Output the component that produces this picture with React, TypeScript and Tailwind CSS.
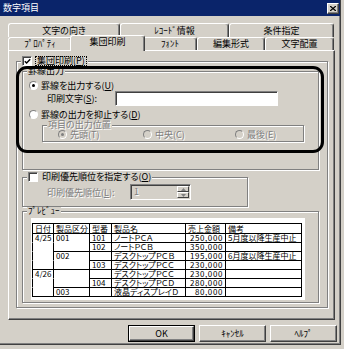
import type { ReactNode } from 'react'

const dim = 'text-[#808080] [text-shadow:1px_1px_0_#ffffff]'

const backTabs = [
  { label: '文字の向き', cls: 'h-full w-[112px]' },
  { label: 'ﾚｺｰﾄﾞ情報', cls: 'h-full w-[109px]' },
  { label: '条件指定', cls: 'h-full w-[105px]' },
]

const frontTabs = [
  { label: 'ﾌﾟﾛﾊﾟﾃｨ', cls: 'h-full w-[64px]' },
  { label: '集団印刷', cls: 'relative z-10 -mx-[2px] -mt-[2px] h-[16px] w-[75px]' },
  { label: 'ﾌｫﾝﾄ', cls: 'h-full w-[54px]' },
  { label: '編集形式', cls: 'h-full w-[68px]' },
  { label: '文字配置', cls: 'h-full w-[69px]' },
]

const header = ['日付', '製品区分', '型番', '製品名', '売上金額', '備考']

const rows = [
  ['4/25', '001', '101', 'ノートＰＣＡ', '250,000', '5月度以降生産中止'],
  ['', '', '102', 'ノートＰＣＢ', '350,000', ''],
  ['', '002', '', 'デスクトップＰＣＢ', '195,000', '6月度以降生産中止'],
  ['', '', '103', 'デスクトップＰＣＣ', '230,000', ''],
  ['4/26', '', '', 'デスクトップＰＣＣ', '230,000', ''],
  ['', '', '104', 'デスクトップＰＣＤ', '280,000', ''],
  ['', '003', '', '液晶ディスプレイＤ', '80,000', ''],
]

function Radio({ checked = false, disabled = false }: { checked?: boolean; disabled?: boolean }) {
  return (
    <span
      className={`relative inline-block h-[9px] w-[9px] shrink-0 rounded-full border border-[#808080] border-r-white border-b-white ${
        disabled ? 'bg-[#d4d0c8]' : 'bg-white'
      }`}
    >
      {checked && (
        <span
          className={`absolute left-[2px] top-[2px] h-[3px] w-[3px] rounded-full ${
            disabled ? 'bg-[#808080]' : 'bg-black'
          }`}
        />
      )}
    </span>
  )
}

function CheckBox({ checked = false }: { checked?: boolean }) {
  return (
    <span className="flex h-[10px] w-[10px] shrink-0 items-center justify-center border border-[#808080] border-r-white border-b-white bg-white shadow-[inset_1px_1px_0_#404040]">
      {checked && (
        <svg width="7" height="7" viewBox="0 0 7 7">
          <path d="M0.8 3.2 L2.6 5 L6.2 1.2" stroke="#000" strokeWidth="1.4" fill="none" />
        </svg>
      )}
    </span>
  )
}

function Group({
  title,
  className = '',
  titleClass = 'h-[10px] leading-[10px]',
  children,
}: {
  title: ReactNode
  className?: string
  titleClass?: string
  children: ReactNode
}) {
  return (
    <fieldset
      className={`border border-[#808080] shadow-[inset_1px_1px_0_#ffffff,1px_1px_0_#ffffff] ${className}`}
    >
      <legend className="ml-[4px] bg-[#d4d0c8] px-[1px]">
        <span className={`flex items-center gap-[3px] ${titleClass}`}>{title}</span>
      </legend>
      {children}
    </fieldset>
  )
}

function Button({ children, isDefault = false }: { children: ReactNode; isDefault?: boolean }) {
  return (
    <div className={`flex h-[17px] w-[67px] ${isDefault ? 'border border-black' : ''}`}>
      <div className="flex h-full w-full items-center justify-center border border-white border-r-[#404040] border-b-[#404040] leading-[11px] shadow-[inset_-1px_-1px_0_#808080]">
        {children}
      </div>
    </div>
  )
}

function SpinButton({ up = false }: { up?: boolean }) {
  return (
    <div className="flex h-[7px] items-center justify-center border border-white border-r-[#404040] border-b-[#404040]">
      <svg width="5" height="3" viewBox="0 0 5 3">
        <path d={up ? 'M0 3 L2.5 0 L5 3 Z' : 'M0 0 L2.5 3 L5 0 Z'} fill="#808080" />
      </svg>
    </div>
  )
}

function Preview() {
  return (
    <div className="grid w-[270px] grid-cols-[21px_36px_22px_74px_40px_76px] border-b border-r border-black text-[8px] [font-feature-settings:'palt']">
      {header.map((h) => (
        <div key={h} className="h-[10px] border-l border-t border-black pl-[2px] leading-[9px]">
          {h}
        </div>
      ))}
      {rows.map((row, r) =>
        row.map((value, c) => {
          const line = c >= 3 || row.slice(0, c + 1).some((v) => v !== '')
          return (
            <div
              key={`${r}-${c}`}
              className={`h-[9px] overflow-hidden whitespace-nowrap border-l border-t border-l-black leading-[8px] ${
                line ? 'border-t-black' : 'border-t-transparent'
              } ${c === 4 ? 'pr-[2px] text-right tracking-[0.6px]' : 'pl-[2px]'}`}
            >
              {value}
            </div>
          )
        })
      )}
    </div>
  )
}

export default function App() {
  return (
    <div className="relative h-[349px] w-[344px] overflow-hidden bg-[#d4d0c8] font-['Noto_Sans_CJK_JP',sans-serif] text-[9px] leading-[11px] text-black [font-feature-settings:'palt']">
      <div className="h-[345px] w-[341px] border-r border-b border-[#404040] shadow-[inset_-1px_-1px_0_#808080]">
        <div className="flex h-[16px] items-center justify-between bg-[#0a246a] pl-[3px] pr-[1px] text-white">
          <span className="leading-[12px]">数字項目</span>
          <div className="flex h-[11px] w-[12px] items-center justify-center border border-white border-r-[#404040] border-b-[#404040] bg-[#d4d0c8] shadow-[inset_-1px_-1px_0_#808080]">
            <svg width="6" height="5" viewBox="0 0 6 5">
              <path d="M0 0 L6 5 M6 0 L0 5" stroke="#000" strokeWidth="1.3" />
            </svg>
          </div>
        </div>

        <div className="pl-[8px] pt-[7px]">
          <div className="flex h-[14px]">
            {backTabs.map((t) => (
              <div
                key={t.label}
                className={`flex justify-center rounded-t-[3px] border-l border-t border-r border-white border-r-[#404040] bg-[#d4d0c8] pt-[1px] leading-[11px] shadow-[inset_-1px_0_0_#808080] ${t.cls}`}
              >
                {t.label}
              </div>
            ))}
          </div>
          <div className="flex h-[13px]">
            {frontTabs.map((t) => (
              <div
                key={t.label}
                className={`flex justify-center rounded-t-[3px] border-l border-t border-r border-white border-r-[#404040] bg-[#d4d0c8] pt-[1px] leading-[10px] shadow-[inset_-1px_0_0_#808080] ${t.cls}`}
              >
                {t.label}
              </div>
            ))}
          </div>

          <div className="h-[270px] w-[327px] border border-white border-r-[#404040] border-b-[#404040] pl-[7px] pt-[5px] shadow-[inset_-1px_-1px_0_#808080]">
            <Group
              className="w-[312px]"
              title={
                <>
                  <CheckBox checked />
                  <span className="border border-dotted border-black px-[1px] leading-[8px]">
                    集団印刷(<u>P</u>)
                  </span>
                </>
              }
            >
              <div className="pb-[4px] pl-[5px]">
                <Group className="w-[297px]" title="罫線出力">
                  <div className="pb-[27px] pl-[6px] pt-[3px]">
                    <div className="flex h-[12px] items-center gap-[3px]">
                      <Radio checked />
                      <span>
                        罫線を出力する(<u>U</u>)
                      </span>
                    </div>
                    <div className="flex h-[15px] items-center pl-[18px]">
                      <span className="w-[68px]">
                        印刷文字(<u>S</u>):
                      </span>
                      <div className="h-[15px] w-[163px] border border-[#808080] border-r-white border-b-white bg-white shadow-[inset_1px_1px_0_#404040]" />
                    </div>
                    <div className="mt-[2px] flex h-[12px] items-center gap-[3px]">
                      <Radio />
                      <span>
                        罫線の出力を抑止する(<u>D</u>)
                      </span>
                    </div>
                    <Group
                      className="ml-[13px] w-[262px]"
                      title={<span className={dim}>項目の出力位置</span>}
                    >
                      <div className="flex h-[9px] items-center pl-[15px] leading-[9px]">
                        <div className={`flex w-[85px] items-center gap-[3px] ${dim}`}>
                          <Radio checked disabled />
                          <span>先頭(T)</span>
                        </div>
                        <div className={`flex w-[92px] items-center gap-[3px] ${dim}`}>
                          <Radio disabled />
                          <span>中央(C)</span>
                        </div>
                        <div className={`flex items-center gap-[3px] ${dim}`}>
                          <Radio disabled />
                          <span>最後(E)</span>
                        </div>
                      </div>
                      <div className="h-[2px]" />
                    </Group>
                  </div>
                </Group>

                <Group
                  className="mt-[2px] w-[226px]"
                  title={
                    <>
                      <CheckBox />
                      <span className="pl-[1px]">
                        印刷優先順位を指定する(<u>O</u>)
                      </span>
                    </>
                  }
                >
                  <div className="mb-[6px] mt-[2px] flex h-[16px] items-center pl-[24px]">
                    <span className={`w-[83px] ${dim}`}>
                      印刷優先順位(<u>L</u>):
                    </span>
                    <div className="flex h-[16px] w-[61px] border border-[#808080] border-r-white border-b-white bg-[#d4d0c8] p-[1px] shadow-[inset_1px_1px_0_#404040]">
                      <span className={`flex-1 pl-[2px] leading-[12px] ${dim}`}>1</span>
                      <div className="flex w-[12px] flex-col">
                        <SpinButton up />
                        <SpinButton />
                      </div>
                    </div>
                  </div>
                </Group>

                <Group className="w-[297px]" titleClass="h-[8px] leading-[8px]" title="ﾌﾟﾚﾋﾞｭｰ">
                  <div className="pb-[2px] pl-[8px] pt-[3px]">
                    <div className="h-[82px] w-[274px] bg-white pl-[1px] pt-[5px]">
                      <Preview />
                    </div>
                  </div>
                </Group>
              </div>
            </Group>
          </div>
        </div>

        <div className="mt-[5px] flex justify-end gap-[4px] pr-[3px]">
          <Button isDefault>OK</Button>
          <Button>ｷｬﾝｾﾙ</Button>
          <Button>ﾍﾙﾌﾟ</Button>
        </div>
      </div>

      <div className="pointer-events-none absolute left-[16px] top-[66px] h-[87px] w-[308px] rounded-[11px] border-[3px] border-black" />
    </div>
  )
}
